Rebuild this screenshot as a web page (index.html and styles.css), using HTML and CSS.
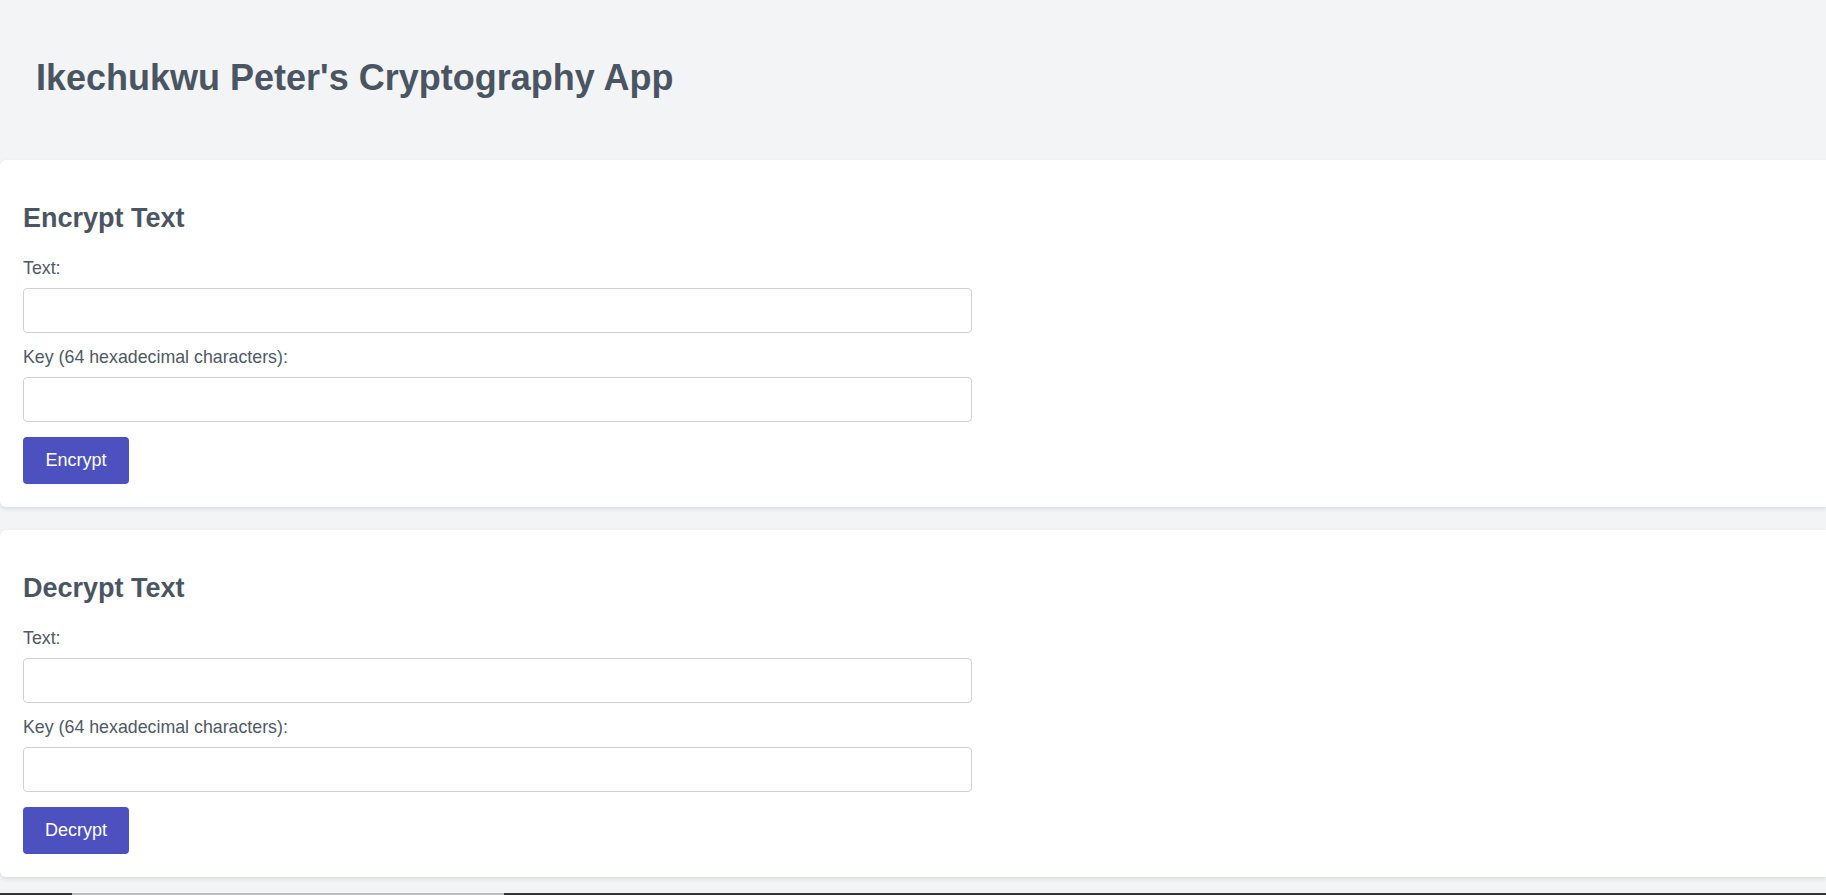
FILE: index.html
```html
<!DOCTYPE html>
<html lang="en">
<head>
<meta charset="utf-8">
<title>Ikechukwu Peter's Cryptography App</title>
<link rel="stylesheet" href="styles.css">
</head>
<body>
<header class="header">
  <h1 class="title">Ikechukwu Peter's Cryptography App</h1>
</header>
<main class="cards">
  <section class="card">
    <h2 class="card-title">Encrypt Text</h2>
    <label class="field-label" for="enc-text">Text:</label>
    <input class="field-input" id="enc-text" type="text">
    <label class="field-label" for="enc-key">Key (64 hexadecimal characters):</label>
    <input class="field-input" id="enc-key" type="text">
    <button class="btn" type="button">Encrypt</button>
  </section>
  <section class="card">
    <h2 class="card-title">Decrypt Text</h2>
    <label class="field-label" for="dec-text">Text:</label>
    <input class="field-input" id="dec-text" type="text">
    <label class="field-label" for="dec-key">Key (64 hexadecimal characters):</label>
    <input class="field-input" id="dec-key" type="text">
    <button class="btn" type="button">Decrypt</button>
  </section>
</main>
<div class="hscroll"><div class="hscroll-thumb"></div></div>
</body>
</html>
```
FILE: styles.css
```css
html, body {
  margin: 0;
  padding: 0;
}
body {
  background: #f3f4f6;
  font-family: "Liberation Sans", Arial, sans-serif;
  color: #4a5568;
  height: 895px;
  overflow: hidden;
}
.header {
  height: 160px;
  display: flex;
  align-items: center;
  padding-left: 36px;
  box-sizing: border-box;
}
.title {
  margin: 0;
  font-size: 36px;
  line-height: 41px;
  font-weight: bold;
  color: #4a5563;
  position: relative;
  top: -3px;
}
.cards {
  display: flex;
  flex-direction: column;
  gap: 23px;
}
.card {
  background: #ffffff;
  border-radius: 6px 0 0 6px;
  box-shadow: 0 2px 4px rgba(0, 0, 0, 0.1);
  padding: 23px 23px 23px 23px;
  display: flex;
  flex-direction: column;
  align-items: flex-start;
}
.card-title {
  margin: 20px 0 24px;
  font-size: 27px;
  line-height: 31px;
  font-weight: bold;
  color: #4a5563;
}
.field-label {
  display: block;
  font-size: 17.8px;
  line-height: 21px;
  color: #4f5865;
  margin-bottom: 9px;
}
.field-input {
  width: 949px;
  height: 45px;
  box-sizing: border-box;
  border: 1px solid #cfd2d6;
  border-radius: 4px;
  margin: 0 0 14px;
  padding: 0 10px;
  font-family: inherit;
  font-size: 18px;
  background: #fff;
}
.btn {
  margin-top: 1px;
  width: 106px;
  height: 47px;
  border: none;
  border-radius: 4px;
  background: #4c51bf;
  color: #ffffff;
  font-family: inherit;
  font-size: 18px;
  padding: 0;
}
.hscroll {
  position: fixed;
  left: 0;
  right: 0;
  bottom: 0;
  height: 2px;
  background: #35363a;
}
.hscroll-thumb {
  margin-left: 72px;
  width: 432px;
  height: 2px;
  background: #bebebe;
}
```
